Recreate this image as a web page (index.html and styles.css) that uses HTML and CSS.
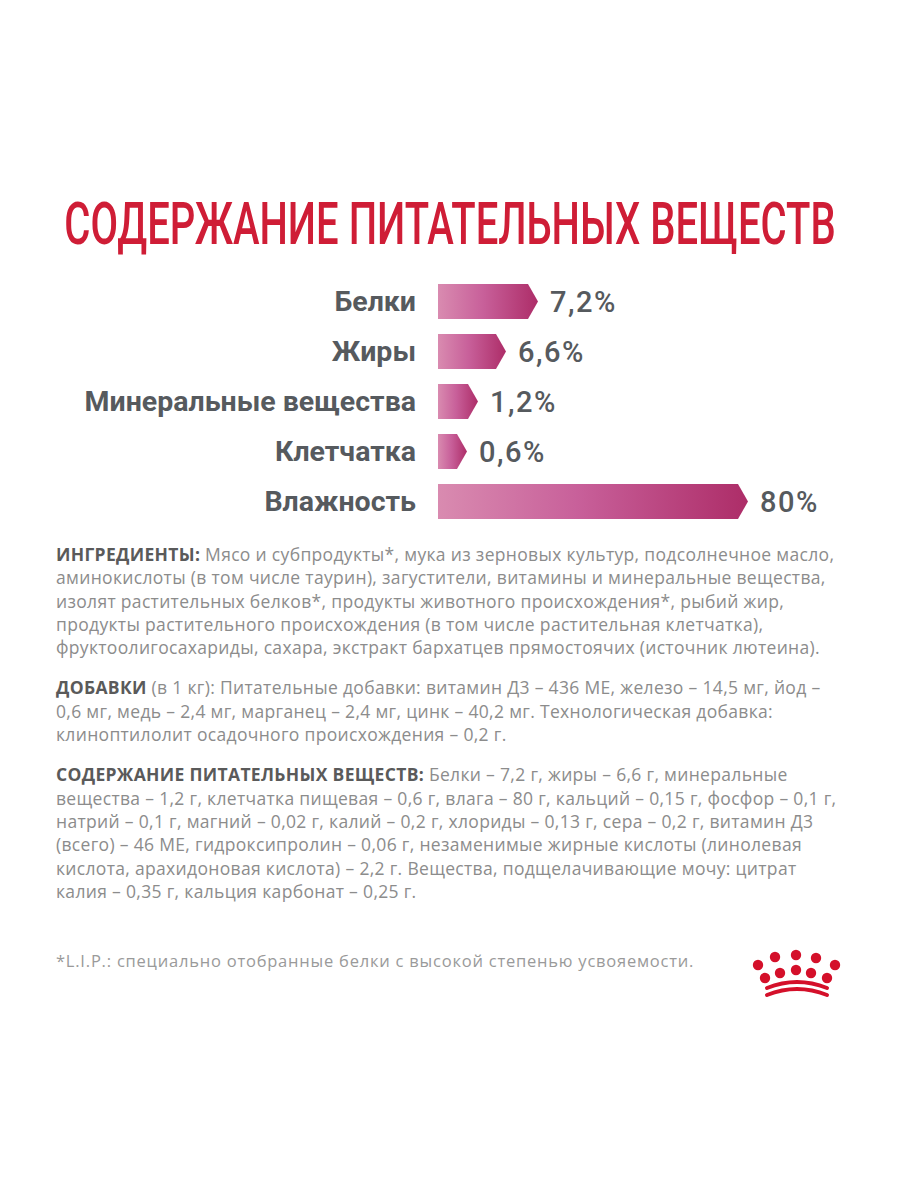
FILE: index.html
```html
<!DOCTYPE html>
<html lang="ru">
<head>
<meta charset="utf-8">
<title>Содержание питательных веществ</title>
<link rel="stylesheet" href="styles.css">
</head>
<body>
<div class="page">
  <h1 class="title"><span class="title-text">СОДЕРЖАНИЕ ПИТАТЕЛЬНЫХ ВЕЩЕСТВ</span></h1>

  <div class="chart">
    <div class="row"><div class="label">Белки</div><div class="bar" style="width:100px"></div><div class="value">7,2%</div></div>
    <div class="row"><div class="label">Жиры</div><div class="bar" style="width:68px"></div><div class="value">6,6%</div></div>
    <div class="row"><div class="label">Минеральные вещества</div><div class="bar" style="width:40px"></div><div class="value">1,2%</div></div>
    <div class="row"><div class="label">Клетчатка</div><div class="bar" style="width:29px"></div><div class="value">0,6%</div></div>
    <div class="row"><div class="label">Влажность</div><div class="bar" style="width:310px"></div><div class="value">80%</div></div>
  </div>

  <div class="text">
    <p><b>ИНГРЕДИЕНТЫ:</b> Мясо и субпродукты*, мука из зерновых культур, подсолнечное масло,<br>аминокислоты (в том числе таурин), загустители, витамины и минеральные вещества,<br>изолят растительных белков*, продукты животного происхождения*, рыбий жир,<br>продукты растительного происхождения (в том числе растительная клетчатка),<br>фруктоолигосахариды, сахара, экстракт бархатцев прямостоячих (источник лютеина).</p>
    <p><b>ДОБАВКИ</b> (в 1 кг): Питательные добавки: витамин Д3 – 436 МЕ, железо – 14,5 мг, йод –<br>0,6 мг, медь – 2,4 мг, марганец – 2,4 мг, цинк – 40,2 мг. Технологическая добавка:<br>клиноптилолит осадочного происхождения – 0,2 г.</p>
    <p><b>СОДЕРЖАНИЕ ПИТАТЕЛЬНЫХ ВЕЩЕСТВ:</b> Белки – 7,2 г, жиры – 6,6 г, минеральные<br>вещества – 1,2 г, клетчатка пищевая – 0,6 г, влага – 80 г, кальций – 0,15 г, фосфор – 0,1 г,<br>натрий – 0,1 г, магний – 0,02 г, калий – 0,2 г, хлориды – 0,13 г, сера – 0,2 г, витамин Д3<br>(всего) – 46 МЕ, гидроксипролин – 0,06 г, незаменимые жирные кислоты (линолевая<br>кислота, арахидоновая кислота) – 2,2 г. Вещества, подщелачивающие мочу: цитрат<br>калия – 0,35 г, кальция карбонат – 0,25 г.</p>
  </div>

  <div class="foot">
    <div class="note">*L.I.P.: специально отобранные белки с высокой степенью усвояемости.</div>
    <svg class="crown" viewBox="0 0 97 56" width="97" height="56" aria-label="Royal Canin">
      <g fill="#d4102a">
        <circle cx="10" cy="20" r="5.2"/>
        <circle cx="27" cy="12" r="5.2"/>
        <circle cx="48" cy="10" r="5.2"/>
        <circle cx="68" cy="13" r="5.2"/>
        <circle cx="87" cy="20" r="5.2"/>
        <circle cx="17" cy="33" r="5.2"/>
        <circle cx="32" cy="28" r="5.2"/>
        <circle cx="48" cy="25" r="5.2"/>
        <circle cx="63" cy="28" r="5.2"/>
        <circle cx="79" cy="33" r="5.2"/>
      </g>
      <g fill="none" stroke="#d4102a" stroke-width="4" stroke-linecap="round">
        <path d="M19 43 Q49 31 79 43"/>
        <path d="M19 50 Q49 38 79 50"/>
      </g>
    </svg>
  </div>
</div>
</body>
</html>
```

FILE: styles.css
```css
html, body {
  margin: 0;
  padding: 0;
  background: #ffffff;
}

.page {
  width: 900px;
  box-sizing: border-box;
  padding: 194px 55px 0 56px;
}

.title {
  margin: 0 -55px 0 -56px;
  display: flex;
  justify-content: center;
  font-family: Roboto, "Liberation Sans", sans-serif;
  font-weight: 500;
  font-size: 40px;
  line-height: 60px;
  color: #cf1d36;
  white-space: nowrap;
}

.title-text {
  display: inline-block;
  transform: scaleY(1.5);
  transform-origin: center;
}

.chart {
  margin-top: 30px;
  margin-left: -56px;
  display: flex;
  flex-direction: column;
  gap: 15px;
}

.row {
  display: flex;
  align-items: center;
  height: 35px;
}

.label {
  width: 416px;
  text-align: right;
  font-family: Roboto, "Liberation Sans", sans-serif;
  font-weight: 700;
  font-size: 28.5px;
  color: #565a5e;
  white-space: nowrap;
}

.bar {
  margin-left: 22px;
  height: 35px;
  background: linear-gradient(to right, #d98bb0 0%, #c8609a 45%, #ad2d68 100%);
  clip-path: polygon(0 0, calc(100% - 10px) 0, 100% 50%, calc(100% - 10px) 100%, 0 100%);
}

.value {
  margin-left: 12px;
  font-family: Roboto, "Liberation Sans", sans-serif;
  font-weight: 500;
  font-size: 29px;
  letter-spacing: 1.5px;
  color: #565a5e;
}

.text {
  margin-top: 24px;
  font-family: "Open Sans", "Liberation Sans", sans-serif;
  font-size: 17.5px;
  letter-spacing: 0.32px;
  line-height: 23.3px;
  color: #8c8c8c;
}

.text p {
  margin: 0 0 17px 0;
  white-space: nowrap;
}

.text b {
  font-weight: 700;
  color: #5a5a5a;
}

.foot {
  display: flex;
  justify-content: space-between;
  align-items: flex-start;
  margin-top: 40px;
}

.note {
  font-family: "Open Sans", "Liberation Sans", sans-serif;
  font-size: 16.5px;
  letter-spacing: 0.78px;
  line-height: 20px;
  color: #9a9a9a;
  padding-top: 8px;
}

.crown {
  display: block;
  margin-top: 2px;
}
```
